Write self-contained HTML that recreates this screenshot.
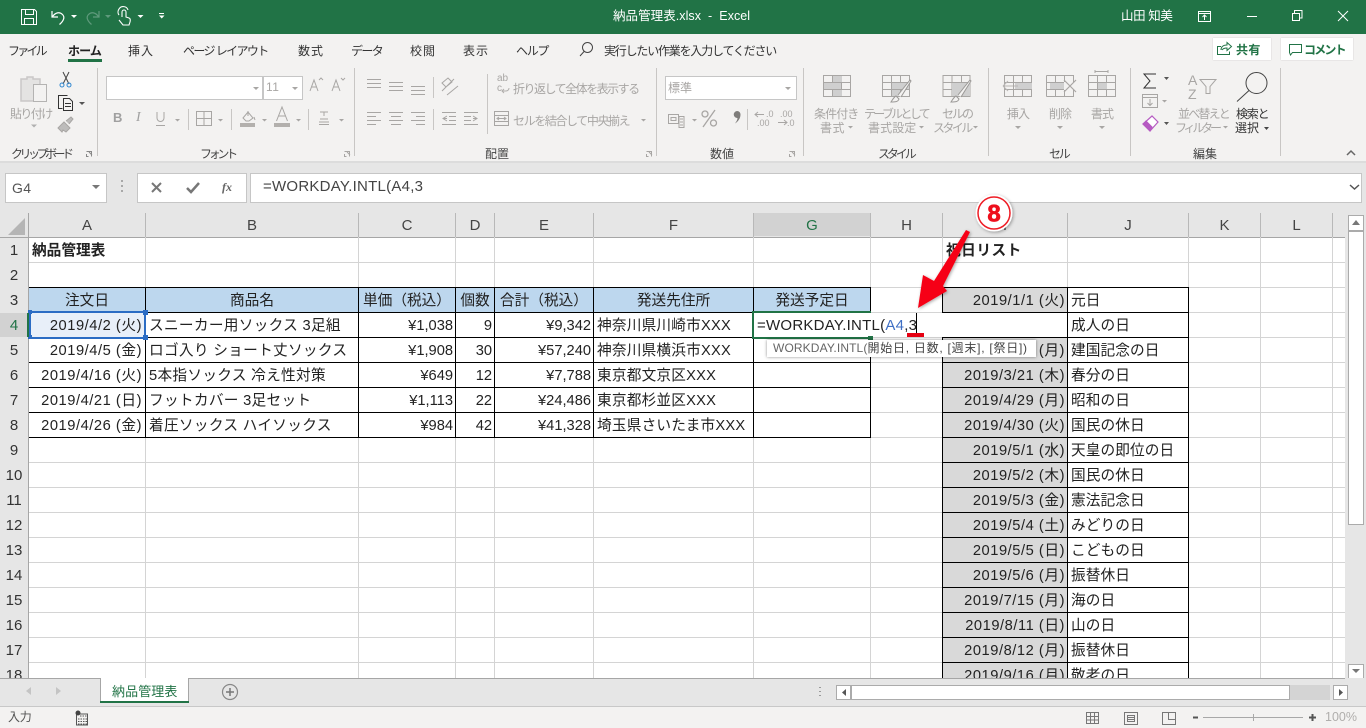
<!DOCTYPE html>
<html lang="ja"><head><meta charset="utf-8"><title>納品管理表.xlsx - Excel</title>
<style>
html,body{margin:0;padding:0;width:1366px;height:728px;overflow:hidden;background:#fff}
body{position:relative;font-family:"Liberation Sans","Noto Sans CJK JP",sans-serif;color:#222}
div,svg{position:absolute}
.t{position:absolute;white-space:nowrap;font-size:12px;line-height:16px;letter-spacing:-.9px}
.g{color:#a8a6a4}
.m{transform:translateX(-50%)}
.h{position:absolute;top:213px;height:24px;line-height:25px;text-align:center;font-size:15px;color:#444}
.n{position:absolute;left:0;width:28px;height:24px;line-height:25px;text-align:center;font-size:15px;color:#333}
.c{position:absolute;height:24px;line-height:27px;font-size:14.67px;white-space:nowrap;color:#222}
.d{text-align:right;letter-spacing:.55px}
.e{text-align:center}
.A{left:29px;width:113px}.B{left:149px;letter-spacing:.3px}.C{left:359px;width:94px;text-align:right}.CC{left:359px;width:96px}
.D{left:456px;width:36px;text-align:right}.DC{left:456px;width:38px}.E{left:495px;width:96px;text-align:right}.EC{left:495px;width:98px}
.F{left:597px;letter-spacing:.2px}.FC{left:594px;width:159px}.GC{left:754px;width:116px}.I{left:943px;width:122px}.J{left:1071px;letter-spacing:.1px}
.AC{left:29px;width:116px}.BC{left:146px;width:212px}
.r1{top:238px}.r3{top:288px}.r4{top:313px}.r5{top:338px}.r6{top:363px}.r7{top:388px}.r8{top:413px}.r9{top:438px}.r10{top:463px}.r11{top:488px}.r12{top:513px}.r13{top:538px}.r14{top:563px}.r15{top:588px}.r16{top:613px}.r17{top:638px}.r18{top:663px}
.r2{top:263px}
.v{position:absolute;top:237px;height:441px;width:1px;background:#d4d4d4}
.x{position:absolute;background:#000}
.hs{position:absolute;top:213px;height:24px;width:1px;background:#b8b8b8}
</style></head><body>

<!-- title bar -->
<div style="left:0;top:0;width:1366px;height:34px;background:#217346"></div>
<div class="t" style="left:613px;top:8px;color:#fff;font-size:12.5px;letter-spacing:.05px">納品管理表.xlsx &nbsp;-&nbsp; Excel</div>
<div class="t" style="left:1121px;top:8px;color:#fff;font-size:12.5px;letter-spacing:-.4px">山田 知美</div>
<svg style="left:0;top:0" width="1366" height="34" fill="none" stroke="#fff" stroke-width="1">
<path d="M21.5 9.5h13l2 2v13h-15zM25.5 9.5v5h8v-5M24.5 24.5v-6h9v6"/>
<path d="M52 11v6h6M52.5 16.500c3-4 7-5 10-2 2.500 2.500 1.500 6-3 10" stroke-width="1.200"/>
<path d="M71 15h6l-3 3z" fill="#fff" stroke="none"/>
<path d="M99 11v6h-6M98.500 16.500c-3-4-7-5-10-2-2.500 2.500-1.500 6 3 10" stroke="#5f9a7c" stroke-width="1.200"/>
<path d="M105 15h6l-3 3z" fill="#5f9a7c" stroke="none"/>
<path d="M122 17v-5a2 2 0 0 1 4 0v5l3 1c1.500.5 1.500 2 1 4l-1 3h-6l-4-5M119 15a5 5 0 0 1 0-6a5 5 0 0 1 9 1" stroke-width="1.100"/>
<path d="M137.500 15h6l-3 3z" fill="#fff" stroke="none"/>
<path d="M159 13.500h5" /><path d="M159 15.500h5.500l-2.750 3z" fill="#fff" stroke="none"/>
<path d="M1198.500 11.500h12v10h-12zM1198.500 13.500h12M1204.500 20v-5M1202.500 17l2-2 2 2"/>
<path d="M1247 16.500h10"/>
<path d="M1292.500 13.500h7v7h-7zM1294.500 13v-2.500h7.500v7.500h-2.500"/>
<path d="M1338 11l10 10M1348 11l-10 10"/>
</svg>

<!-- ribbon -->
<div style="left:0;top:34px;width:1366px;height:127px;background:#f3f2f1"></div>
<div style="left:0;top:161px;width:1366px;height:2px;background:#dcdcdc"></div>
<div class="t" style="left:8px;top:43px;letter-spacing:-2.8px;color:#333">ファイル</div>
<div class="t" style="left:68px;top:43px;font-weight:700;letter-spacing:-.9px;color:#222">ホーム</div>
<div style="left:68px;top:59px;width:34px;height:3px;background:#217346"></div>
<div class="t" style="left:128px;top:43px;letter-spacing:1px;color:#333">挿入</div>
<div class="t" style="left:183px;top:43px;letter-spacing:-1.6px;color:#333">ページ レイアウト</div>
<div class="t" style="left:298px;top:43px;letter-spacing:1px;color:#333">数式</div>
<div class="t" style="left:351px;top:43px;letter-spacing:-1.6px;color:#333">データ</div>
<div class="t" style="left:410px;top:43px;letter-spacing:1px;color:#333">校閲</div>
<div class="t" style="left:463px;top:43px;letter-spacing:1px;color:#333">表示</div>
<div class="t" style="left:516px;top:43px;letter-spacing:-1.300px;color:#333">ヘルプ</div>
<div class="t" style="left:604px;top:43px;letter-spacing:-1.200px;color:#333">実行したい作業を入力してください</div>

<div style="left:1213px;top:38px;width:58px;height:22px;background:#fff;box-shadow:0 0 1px #bbb"></div>
<div class="t" style="left:1236px;top:42px;font-weight:700;color:#217346;letter-spacing:.4px">共有</div>
<div style="left:1281px;top:38px;width:72px;height:22px;background:#fff;box-shadow:0 0 1px #bbb"></div>
<div class="t" style="left:1304px;top:42px;font-weight:700;color:#217346;letter-spacing:-1.800px">コメント</div>

<!-- font & number boxes -->
<div style="left:106px;top:76px;width:155px;height:22px;background:#fff;border:1px solid #c6c6c6"></div>
<div style="left:263px;top:76px;width:38px;height:22px;background:#fff;border:1px solid #c6c6c6"></div>
<div class="t g" style="left:266px;top:79px;letter-spacing:.5px">11</div>
<div style="left:665px;top:76px;width:130px;height:22px;background:#fff;border:1px solid #c6c6c6"></div>
<div class="t g" style="left:668px;top:80px;letter-spacing:0">標準</div>

<svg style="left:0;top:34px" width="1366" height="127" viewBox="0 34 1366 127" fill="none" stroke="#a8a6a4" stroke-width="1">
<!-- search, share, comment -->
<path d="M580 56l4.500-5" stroke="#444"/><circle cx="587.500" cy="47.500" r="5" stroke="#444"/>
<path d="M1221 46.500h-3.500v8h12v-3M1221 50c0-3 2-5 6-5v-2.500l4.500 4-4.500 4v-2.500c-2 0-4 .5-5 2" stroke="#217346"/>
<path d="M1289.500 44.500h12v8h-9l-2 2.500-1-2.500z" stroke="#217346"/>
<!-- separators -->
<path d="M97.500 68v88M354.500 68v88M656.500 68v88M803.500 68v88M988.500 68v88M1130.500 68v88M1280.500 68v88" stroke="#c8c6c4"/>
<path d="M188.500 109v21M231.500 109v21M308.500 109v21M433.500 77v21M433.500 109v21M487.500 74v60M747.500 109v21" stroke="#c8c6c4"/>
<!-- clipboard -->
<path d="M21 79h6v-2h6v2h7v22H21z" fill="#e4e3e2" stroke="#c9c8c7" stroke-width="1.500"/>
<path d="M33.500 84.500h13v17h-13z" fill="#f3f2f1" stroke="#b4b3b2"/>
<path d="M31 124.500h6l-3 3z" fill="#b0b0b0" stroke="none"/>
<path d="M63 72l6 12M69 72l-6 12" stroke="#444"/>
<circle cx="62" cy="85" r="2" stroke="#2e86d0"/><circle cx="69" cy="85" r="2" stroke="#2e86d0"/>
<path d="M62.500 108.500h-4v-13h9M63.500 98.500h6l3 3v9h-9zM65 103.500h6M65 106.500h6" stroke="#333"/>
<path d="M79 102h6l-3 3z" fill="#555" stroke="none"/>
<path d="M58 128l6-6 6 6-4 4-3-2-1 2zM66 121l5-4 2 2-4 5" fill="#bdbcbb" stroke="#a8a6a4"/>
<!-- launchers -->
<path d="M86.500 151.500h5v5M89 152l3 3M86.500 154v2.500h2" stroke="#888"/>
<path d="M344.500 151.500h5v5M347 152l3 3M344.500 154v2.500h2"/>
<path d="M646.500 151.500h5v5M649 152l3 3M646.500 154v2.500h2"/>
<path d="M789.500 151.500h5v5M792 152l3 3M789.500 154v2.500h2"/>
<!-- drop arrows -->
<path d="M253 87h6l-3 3zM292 87h6l-3 3zM175 119h5l-2.500 2.500zM218 119h5l-2.500 2.500zM262 119h5l-2.500 2.500zM296 119h5l-2.500 2.500zM339 119h5l-2.500 2.500zM785 87h6l-3 3zM641 119h5l-2.500 2.500zM692 119h5l-2.500 2.500z" fill="#a8a6a4" stroke="none"/>
<path d="M848 126h5l-2.500 2.500zM919 126h5l-2.500 2.500zM973 126h5l-2.500 2.500zM1223 126h5l-2.500 2.500zM1162 100h5l-2.500 2.500z" fill="#a8a6a4" stroke="none"/>
<!-- font grow/shrink -->
<path d="M310 91l4-11 4 11M311.500 87h5.500M319 80l2-2 2 2M332 91l4-11 4 11M333.500 87h5.500M341 78l2 2 2-2"/>
<path d="M157 112v6a3.500 3.500 0 0 0 7 0v-6M156 125.500h9"/>
<path d="M196.500 111.500h15v14h-15zM204 111v15M196 118.500h16"/>
<path d="M240 127h15v-4h-15z" fill="#b3b0ad" stroke="none"/>
<path d="M243 118l5-6 5 6-4 3h-3zM248 111v5M254 117l1 3"/>
<path d="M274 127h16v-4h-16z" fill="#b3b0ad" stroke="none"/>
<path d="M276.500 121l5.500-14 5.500 14M278.500 116h7"/>
<path d="M320 112h8M324 112v4M319 122h10M319 124.500h10M320 119h8"/>
<!-- align -->
<path d="M367 79.500h14M367 83.500h14M367 87.500h14M389 82.500h14M389 86.500h14M389 90.500h14M411 86.500h14M411 90.500h14M411 94.500h14"/>
<path d="M367 112.500h14M367 116.500h9M367 120.500h14M367 124.500h9M389 112.500h14M391 116.500h10M389 120.500h14M391 124.500h10M411 112.500h14M416 116.500h9M411 120.500h14M416 124.500h9"/>
<path d="M442 91l12-12M447 95l11-9M442 83l6-5 4 4-6 5z"/>
<path d="M442 112.500h14M449 116.500h7M449 120.500h7M442 124.500h14M447 116l-4 2.500 4 2.500M447 118.500h-4"/>
<path d="M464 112.500h14M464 116.500h7M464 120.500h7M464 124.500h14M473 116l4 2.500-4 2.500M473 118.500h4"/>
<path d="M509 88a3 3 0 0 1-3 3h-4M504 89l-2 2 2 2" stroke="#b0aeac"/>
<path d="M494.500 111.500h14v14h-14zM494 115.500h15M494 121.500h15M498 118.500h7M499 117l-2 1.500 2 1.500M504 117l2 1.500-2 1.500"/>
<!-- number icons -->
<path d="M668.500 114.500h10v9h-10zM671 117.500h5v3h-5zM679 116.500h5v11h-5zM680 119h3M680 122h3M680 125h3"/>
<path d="M715 110l-12 17" stroke-width="1.300"/>
<circle cx="705" cy="114" r="3" stroke-width="1.300"/><circle cx="713.500" cy="123" r="3" stroke-width="1.300"/>
<path d="M737 111c2 0 3.500 1.500 3.500 3.500 0 4-2.500 7-5.500 9 1.500-2 2.500-4 2.500-5.500a3.500 3.500 0 0 1-.5-7z" fill="#7f7d7b" stroke="none"/>
<path d="M755 114.500h9M758 112l-3 2.500 3 2.500M778 122.500h9M784 120l3 2.500-3 2.500"/>
<!-- style icons -->
<path d="M823.500 75.500h27v21h-27zM823 82.500h28M823 89.500h28M832.500 75v22M841.500 75v22"/>
<path d="M833 76h9v6h-9zM824 83h17v6h-17zM833 90h9v6h-9z" fill="#cfcfcf" stroke="none"/>
<path d="M882.500 75.500h27v21h-27zM882 82.500h28M882 89.500h28M891.500 75v22M900.500 75v22"/>
<path d="M892 83h17v6h-17zM892 90h8v6h-8z" fill="#cfcfcf" stroke="none"/>
<path d="M943 75.500h27v21h-27zM943 82.500h27M943 89.500h27M952 75v22M961.500 75v22"/>
<path d="M952 83h18v13h-18z" fill="#cfcfcf" stroke="none"/>
<path d="M896 96c-2 1-3 3-5 6 4 0 7 0 8-3zM898 95l12-15 1 1-10 16" fill="#f3f2f1" stroke="#9a9896"/>
<path d="M956 96c-2 1-3 3-5 6 4 0 7 0 8-3zM958 95l12-15 1 1-10 16" fill="#f3f2f1" stroke="#9a9896"/>
<!-- cell icons -->
<path d="M1004.500 75.500h27v21h-27zM1004 82.500h28M1004 89.500h28M1013.500 75v22M1022.500 75v22"/>
<path d="M1015 83h17v6h-17z" fill="#cfcfcf" stroke="none"/>
<path d="M1003 86h10M1003 86l5-5M1003 86l5 5M1014 86h4" fill="none" stroke="#b8b6b4"/>
<path d="M1046.500 75.500h27M1046.500 96.500h27M1046.500 75.500v21M1046 82.500h18M1046 89.500h18M1055.500 75v22M1064.500 75v7M1064.500 90v7M1073.500 75v7M1073.500 90v7"/>
<path d="M1050 83h14v6h-14z" fill="#cfcfcf" stroke="none"/>
<path d="M1064 80l12 12M1076 80l-12 12" stroke-width="1.200"/>
<path d="M1088.500 75.500h27v21h-27zM1088 82.500h28M1088 89.500h28M1097.500 75v22M1106.500 75v22"/>
<path d="M1098 83h9v6h-9z" fill="#cfcfcf" stroke="none"/>
<path d="M1095 71.500h13M1095 70v3M1108 70v3"/>
<path d="M1015 126h6l-3 3zM1057 126h6l-3 3zM1099 126h6l-3 3z" fill="#a8a6a4" stroke="none"/>
<!-- edit icons -->
<path d="M1156 74h-12l6 7-6 7h12" stroke="#333"/>
<path d="M1164 77h5l-2.500 3zM1164 122h5l-2.500 3z" fill="#555" stroke="none"/>
<path d="M1142.500 94.500h15v13h-15zM1143 97.500h14M1150 99v6M1147.500 103l2.500 2.500 2.500-2.500"/>
<path d="M1143 124l9-8 6 6-8 9z" fill="#fff" stroke="#b65bc2" stroke-width="1.200"/>
<path d="M1143 124l3-3 6 6-2 4z" fill="#b65bc2" stroke="#b65bc2"/>
<text x="1188" y="85" font-family="Liberation Sans" font-size="14" fill="#a8a6a4" stroke="none">A</text>
<text x="1188" y="99" font-family="Liberation Sans" font-size="14" fill="#a8a6a4" stroke="none">Z</text>
<path d="M1200 79.500h16l-6 7v7h-4v-7z"/>
<circle cx="1256.500" cy="83" r="10.500" stroke="#444"/><path d="M1249 90.500l-12 11" stroke="#444"/>
<path d="M1264 127h5l-2.500 3z" fill="#444" stroke="none"/>
<path d="M1347 155l4-4 4 4" stroke="#666" stroke-width="1.500"/>
</svg>

<div class="t g" style="left:10px;top:106px;letter-spacing:-1.600px">貼り付け</div>
<div class="t g" style="left:497px;top:74px;font-size:10px;letter-spacing:0;line-height:10px">ab<br>c</div>
<div class="t g" style="left:513px;top:81px;letter-spacing:-1.500px">折り返して全体を表示する</div>
<div class="t g" style="left:513px;top:113px;letter-spacing:-1.400px">セルを結合して中央揃え</div>
<div class="t g" style="left:814px;top:106px">条件付き</div>
<div class="t g" style="left:820px;top:120px;letter-spacing:.5px">書式</div>
<div class="t g" style="left:864px;top:106px;letter-spacing:-2.700px">テーブルとして</div>
<div class="t g" style="left:868px;top:120px;letter-spacing:.1px">書式設定</div>
<div class="t g" style="left:942px;top:106px;letter-spacing:-2px">セルの</div>
<div class="t g" style="left:933px;top:120px;letter-spacing:-2.600px">スタイル</div>
<div class="t g" style="left:1018px;top:106px;transform:translateX(-50%)">挿入</div>
<div class="t g" style="left:1060px;top:106px;transform:translateX(-50%)">削除</div>
<div class="t g" style="left:1102px;top:106px;transform:translateX(-50%)">書式</div>
<div class="t g" style="left:1178px;top:106px;letter-spacing:-1.800px">並べ替えと</div>
<div class="t g" style="left:1175px;top:120px;letter-spacing:-3.200px">フィルター</div>
<div class="t" style="left:1236px;top:106px;color:#333;letter-spacing:-1.200px">検索と</div>
<div class="t" style="left:1235px;top:120px;color:#333;letter-spacing:0">選択</div>
<div class="t" style="left:11px;top:146px;color:#444;letter-spacing:-3.500px">クリップボード</div>
<div class="t" style="left:200px;top:146px;color:#444;letter-spacing:-3.300px">フォント</div>
<div class="t" style="left:485px;top:146px;color:#444;letter-spacing:0">配置</div>
<div class="t" style="left:710px;top:146px;color:#444;letter-spacing:0">数値</div>
<div class="t" style="left:878px;top:146px;color:#444;letter-spacing:-3.100px">スタイル</div>
<div class="t" style="left:1049px;top:146px;color:#444;letter-spacing:-2.200px">セル</div>
<div class="t" style="left:1193px;top:146px;color:#444;letter-spacing:0">編集</div>
<div class="t" style="left:113px;top:110px;font-weight:700;font-size:13px;color:#a0a0a0">B</div>
<div class="t" style="left:136px;top:110px;font-family:'Liberation Serif',serif;font-style:italic;font-size:14px;color:#a0a0a0">I</div>
<div class="t g" style="left:766px;top:110px;font-size:9px;letter-spacing:0;line-height:9px">.0</div>
<div class="t g" style="left:757px;top:119px;font-size:9px;letter-spacing:0;line-height:9px">.00</div>
<div class="t g" style="left:780px;top:110px;font-size:9px;letter-spacing:0;line-height:9px">.00</div>
<div class="t g" style="left:787px;top:119px;font-size:9px;letter-spacing:0;line-height:9px">.0</div>

<!-- formula bar area -->
<div style="left:0;top:163px;width:1366px;height:50px;background:#e6e6e6"></div>
<div style="left:5px;top:173px;width:100px;height:28px;background:#fff;border:1px solid #c6c6c6"></div>
<div class="t" style="left:12px;top:180px;font-size:14px;color:#555;letter-spacing:.3px">G4</div>
<div style="left:137px;top:173px;width:108px;height:28px;background:#fff;border:1px solid #c6c6c6"></div>
<div style="left:250px;top:173px;width:1110px;height:28px;background:#fff;border:1px solid #c6c6c6"></div>
<div class="t" style="left:263px;top:179px;font-size:15px;color:#444;letter-spacing:.25px">=WORKDAY.INTL(A4,3</div>
<div class="t" style="left:222px;top:179px;font-family:'Liberation Serif',serif;font-style:italic;font-weight:700;font-size:12px;color:#666;letter-spacing:0">fx</div>
<svg style="left:0;top:165px" width="1366" height="48" viewBox="0 165 1366 48" fill="none">
<path d="M92 185h8l-4 4z" fill="#777"/>
<path d="M122 180v2M122 185v2M122 190v2" stroke="#999" stroke-width="2" opacity=".8"/>
<path d="M152 183l9 9M161 183l-9 9" stroke="#777" stroke-width="2"/>
<path d="M187 188l4 4 8-9" stroke="#777" stroke-width="2.500"/>
<path d="M1350 185l4.500 4 4.500-4" stroke="#555" stroke-width="1.500"/>
</svg>

<!-- headers -->
<div style="left:0;top:213px;width:1345px;height:24px;background:#e6e6e6"></div>
<div style="left:754px;top:213px;width:116px;height:23px;background:#d2d2d2"></div>
<div style="left:0;top:237px;width:28px;height:441px;background:#e6e6e6"></div>
<div style="left:0;top:313px;width:28px;height:24px;background:#d2d2d2"></div>
<svg style="left:8px;top:218px" width="18" height="17"><path d="M17 0v17H0z" fill="#b5b5b5"/></svg>
<div class="hs" style="left:28px"></div><div class="hs" style="left:145px"></div><div class="hs" style="left:358px"></div><div class="hs" style="left:455px"></div><div class="hs" style="left:494px"></div><div class="hs" style="left:593px"></div><div class="hs" style="left:753px"></div><div class="hs" style="left:870px"></div><div class="hs" style="left:942px"></div><div class="hs" style="left:1067px"></div><div class="hs" style="left:1188px"></div><div class="hs" style="left:1260px"></div><div class="hs" style="left:1332px"></div>
<div class="h AC">A</div><div class="h BC">B</div><div class="h CC">C</div><div class="h DC">D</div><div class="h EC">E</div><div class="h FC">F</div><div class="h GC" style="color:#217346">G</div>
<div class="h" style="left:871px;width:71px">H</div><div class="h" style="left:943px;width:124px">I</div><div class="h" style="left:1068px;width:120px">J</div><div class="h" style="left:1189px;width:71px">K</div><div class="h" style="left:1261px;width:71px">L</div>
<div class="n r1">1</div><div class="n r2">2</div><div class="n r3">3</div><div class="n r4" style="color:#217346">4</div><div class="n r5">5</div><div class="n r6">6</div><div class="n r7">7</div><div class="n r8">8</div><div class="n r9">9</div><div class="n r10">10</div><div class="n r11">11</div><div class="n r12">12</div><div class="n r13">13</div><div class="n r14">14</div><div class="n r15">15</div><div class="n r16">16</div><div class="n r17">17</div><div class="n r18" style="height:15px;overflow:hidden">18</div>

<!-- grid -->
<div style="left:29px;top:237px;width:1316px;height:441px;background:repeating-linear-gradient(to bottom,#fff 0,#fff 24px,#d4d4d4 24px,#d4d4d4 25px);background-position:0 1px"></div>
<div style="left:29px;top:237px;width:1316px;height:1px;background:#a6a6a6"></div>
<div style="left:0;top:237px;width:29px;height:1px;background:#a6a6a6"></div>
<div style="left:28px;top:213px;width:1px;height:465px;background:#a6a6a6"></div>
<div class="v" style="left:145px"></div><div class="v" style="left:358px"></div><div class="v" style="left:455px"></div><div class="v" style="left:494px"></div><div class="v" style="left:593px"></div><div class="v" style="left:753px"></div><div class="v" style="left:870px"></div><div class="v" style="left:942px"></div><div class="v" style="left:1067px"></div><div class="v" style="left:1188px"></div><div class="v" style="left:1260px"></div><div class="v" style="left:1332px"></div>

<!-- fills -->
<div style="left:29px;top:288px;width:841px;height:24px;background:#bdd7ee"></div>
<div style="left:943px;top:288px;width:124px;height:390px;background:#d9d9d9"></div>
<div style="left:1068px;top:288px;width:120px;height:390px;background:#fff"></div>
<div style="left:30px;top:313px;width:115px;height:24px;background:#e8eff9"></div>
<!-- black borders -->
<div class="x" style="left:29px;top:287px;width:842px;height:1px"></div>
<div class="x" style="left:29px;top:312px;width:842px;height:1px"></div>
<div class="x" style="left:29px;top:337px;width:842px;height:1px"></div>
<div class="x" style="left:29px;top:362px;width:842px;height:1px"></div>
<div class="x" style="left:29px;top:387px;width:842px;height:1px"></div>
<div class="x" style="left:29px;top:412px;width:842px;height:1px"></div>
<div class="x" style="left:29px;top:437px;width:842px;height:1px"></div>
<div class="x" style="left:145px;top:287px;width:1px;height:151px"></div>
<div class="x" style="left:358px;top:287px;width:1px;height:151px"></div>
<div class="x" style="left:455px;top:287px;width:1px;height:151px"></div>
<div class="x" style="left:494px;top:287px;width:1px;height:151px"></div>
<div class="x" style="left:593px;top:287px;width:1px;height:151px"></div>
<div class="x" style="left:753px;top:287px;width:1px;height:151px"></div>
<div class="x" style="left:870px;top:287px;width:1px;height:151px"></div>
<div class="x" style="left:942px;top:287px;width:1px;height:391px"></div>
<div class="x" style="left:1067px;top:287px;width:1px;height:391px"></div>
<div class="x" style="left:1188px;top:287px;width:1px;height:391px"></div>
<div class="x" style="left:942px;top:287px;width:247px;height:1px"></div>
<div class="x" style="left:942px;top:312px;width:247px;height:1px"></div>
<div class="x" style="left:942px;top:337px;width:247px;height:1px"></div>
<div class="x" style="left:942px;top:362px;width:247px;height:1px"></div>
<div class="x" style="left:942px;top:387px;width:247px;height:1px"></div>
<div class="x" style="left:942px;top:412px;width:247px;height:1px"></div>
<div class="x" style="left:942px;top:437px;width:247px;height:1px"></div>
<div class="x" style="left:942px;top:462px;width:247px;height:1px"></div>
<div class="x" style="left:942px;top:487px;width:247px;height:1px"></div>
<div class="x" style="left:942px;top:512px;width:247px;height:1px"></div>
<div class="x" style="left:942px;top:537px;width:247px;height:1px"></div>
<div class="x" style="left:942px;top:562px;width:247px;height:1px"></div>
<div class="x" style="left:942px;top:587px;width:247px;height:1px"></div>
<div class="x" style="left:942px;top:612px;width:247px;height:1px"></div>
<div class="x" style="left:942px;top:637px;width:247px;height:1px"></div>
<div class="x" style="left:942px;top:662px;width:247px;height:1px"></div>

<!-- cells -->
<div class="c r1" style="left:32px;font-weight:700">納品管理表</div>
<div class="c r1" style="left:946px;font-weight:700;letter-spacing:.5px">祝日リスト</div>
<div class="c r3 AC e">注文日</div><div class="c r3 BC e">商品名</div><div class="c r3 CC e">単価（税込）</div><div class="c r3 DC e">個数</div><div class="c r3 EC e">合計（税込）</div><div class="c r3 FC e">発送先住所</div><div class="c r3 GC e">発送予定日</div>
<div class="c r4 A d">2019/4/2 (火)</div><div class="c r4 B">スニーカー用ソックス 3足組</div><div class="c r4 C">¥1,038</div><div class="c r4 D">9</div><div class="c r4 E">¥9,342</div><div class="c r4 F">神奈川県川崎市XXX</div>
<div class="c r5 A d">2019/4/5 (金)</div><div class="c r5 B">ロゴ入り ショート丈ソックス</div><div class="c r5 C">¥1,908</div><div class="c r5 D">30</div><div class="c r5 E">¥57,240</div><div class="c r5 F">神奈川県横浜市XXX</div>
<div class="c r6 A d">2019/4/16 (火)</div><div class="c r6 B">5本指ソックス 冷え性対策</div><div class="c r6 C">¥649</div><div class="c r6 D">12</div><div class="c r6 E">¥7,788</div><div class="c r6 F">東京都文京区XXX</div>
<div class="c r7 A d">2019/4/21 (日)</div><div class="c r7 B">フットカバー 3足セット</div><div class="c r7 C">¥1,113</div><div class="c r7 D">22</div><div class="c r7 E">¥24,486</div><div class="c r7 F">東京都杉並区XXX</div>
<div class="c r8 A d">2019/4/26 (金)</div><div class="c r8 B">着圧ソックス ハイソックス</div><div class="c r8 C">¥984</div><div class="c r8 D">42</div><div class="c r8 E">¥41,328</div><div class="c r8 F">埼玉県さいたま市XXX</div>

<div class="c r3 I d">2019/1/1 (火)</div><div class="c r3 J">元日</div>
<div class="c r4 J">成人の日</div>
<div class="c r5 I d">2019/2/11 (月)</div><div class="c r5 J">建国記念の日</div>
<div class="c r6 I d">2019/3/21 (木)</div><div class="c r6 J">春分の日</div>
<div class="c r7 I d">2019/4/29 (月)</div><div class="c r7 J">昭和の日</div>
<div class="c r8 I d">2019/4/30 (火)</div><div class="c r8 J">国民の休日</div>
<div class="c r9 I d">2019/5/1 (水)</div><div class="c r9 J">天皇の即位の日</div>
<div class="c r10 I d">2019/5/2 (木)</div><div class="c r10 J">国民の休日</div>
<div class="c r11 I d">2019/5/3 (金)</div><div class="c r11 J">憲法記念日</div>
<div class="c r12 I d">2019/5/4 (土)</div><div class="c r12 J">みどりの日</div>
<div class="c r13 I d">2019/5/5 (日)</div><div class="c r13 J">こどもの日</div>
<div class="c r14 I d">2019/5/6 (月)</div><div class="c r14 J">振替休日</div>
<div class="c r15 I d">2019/7/15 (月)</div><div class="c r15 J">海の日</div>
<div class="c r16 I d">2019/8/11 (日)</div><div class="c r16 J">山の日</div>
<div class="c r17 I d">2019/8/12 (月)</div><div class="c r17 J">振替休日</div>
<div class="c r18 I d" style="height:15px;overflow:hidden">2019/9/16 (月)</div><div class="c r18 J" style="height:15px;overflow:hidden">敬老の日</div>

<!-- reference marks -->
<div style="left:29px;top:311px;width:113px;height:24px;border:2px solid #2b6cc4"></div>
<div style="left:28px;top:310px;width:4px;height:4px;background:#2b6cc4"></div>
<div style="left:143px;top:310px;width:5px;height:5px;background:#2b6cc4"></div>
<div style="left:28px;top:335px;width:4px;height:4px;background:#2b6cc4"></div>
<div style="left:143px;top:335px;width:5px;height:5px;background:#2b6cc4"></div>
<div style="left:27px;top:313px;width:2px;height:24px;background:#217346"></div>

<!-- active cell editor -->
<div style="left:754px;top:313px;width:313px;height:24px;background:#fff"></div>
<div style="left:752px;top:311px;width:119px;height:2px;background:#217346"></div>
<div style="left:752px;top:311px;width:2px;height:28px;background:#217346"></div>
<div style="left:752px;top:337px;width:119px;height:2px;background:#217346"></div>
<div style="left:868px;top:336px;width:5px;height:4px;background:#217346"></div>
<div class="c r4" style="left:757px;font-size:15px;line-height:26px;letter-spacing:.25px;color:#222">=WORKDAY.INTL(<span style="color:#3f6fc4">A4</span>,3</div>
<div style="left:916px;top:313px;width:1px;height:24px;background:#000"></div>
<div style="left:907px;top:333px;width:17px;height:4px;background:#e60012"></div>

<!-- tooltip -->
<div style="left:767px;top:340px;width:269px;height:17px;background:#fff;box-shadow:0 0 3px rgba(0,0,0,.45)"></div>
<div class="t" style="left:773px;top:340px;font-size:12px;letter-spacing:.12px;color:#666;line-height:16px">WORKDAY.INTL(<span style="color:#444;letter-spacing:.75px">開始日, 日数, [週末], [祭日])</span></div>

<!-- callout -->
<svg style="left:900px;top:190px" width="130" height="125" viewBox="900 190 130 125">
<defs><filter id="s" x="-30%" y="-30%" width="160%" height="160%"><feDropShadow dx="1" dy="1" stdDeviation="1.500" flood-color="#000" flood-opacity=".35"/></filter></defs>
<polygon points="918,308 923,275 934,281 966,230 970,232 943,286 947,291" fill="#f60014" filter="url(#s)"/>
<circle cx="994" cy="213" r="18.500" fill="#fff" filter="url(#s)"/>
<circle cx="994" cy="213" r="16" fill="#fff" stroke="#ee1c25" stroke-width="1.500"/>
<text x="994" y="221.500" text-anchor="middle" font-family="Liberation Sans" font-weight="700" font-size="24" fill="#ee0f1c" stroke="#ee0f1c" stroke-width=".7">8</text>
</svg>

<!-- vertical scrollbar -->
<div style="left:1345px;top:213px;width:21px;height:465px;background:#e6e6e6"></div>
<div style="left:1348px;top:215px;width:14px;height:14px;background:#fff;border:1px solid #ababab"></div>
<div style="left:1348px;top:231px;width:14px;height:292px;background:#fff;border:1px solid #ababab"></div>
<div style="left:1348px;top:664px;width:14px;height:13px;background:#fff;border:1px solid #ababab"></div>
<svg style="left:1348px;top:215px" width="16" height="16"><path d="M4 10h8l-4-5z" fill="#777"/></svg>
<svg style="left:1348px;top:664px" width="16" height="14"><path d="M4 5h8l-4 4z" fill="#777"/></svg>

<!-- tab bar -->
<div style="left:0;top:678px;width:1366px;height:28px;background:#e6e6e6"></div>
<div style="left:0;top:678px;width:1345px;height:1px;background:#a6a6a6"></div>
<div style="left:100px;top:678px;width:87px;height:24px;background:#fff;border:solid #a6a6a6;border-width:0 1px"></div>
<div style="left:100px;top:701px;width:89px;height:2px;background:#217346"></div>
<div class="t" style="left:112px;top:684px;font-size:13px;letter-spacing:.1px;color:#217346">納品管理表</div>
<svg style="left:0;top:678px" width="1366" height="28" fill="none">
<path d="M31 9v8l-5-4z" fill="#c4c4c4"/><path d="M56 9v8l5-4z" fill="#c4c4c4"/>
<circle cx="230" cy="14" r="7.500" stroke="#888" stroke-width="1.200"/><path d="M226 14h8M230 10v8" stroke="#777" stroke-width="1.500"/>
<path d="M820 9v1M820 13v1M820 17v1" stroke="#999" stroke-width="2"/>
</svg>
<div style="left:836px;top:685px;width:13px;height:13px;background:#fff;border:1px solid #ababab"></div>
<div style="left:851px;top:685px;width:437px;height:13px;background:#fff;border:1px solid #ababab"></div>
<div style="left:1290px;top:685px;width:40px;height:15px;background:#d4d4d4"></div>
<div style="left:1333px;top:685px;width:13px;height:13px;background:#fff;border:1px solid #ababab"></div>
<svg style="left:836px;top:685px" width="16" height="15"><path d="M10 4v7l-4-3.500z" fill="#555"/></svg>
<svg style="left:1333px;top:685px" width="16" height="15"><path d="M6 4v7l4-3.500z" fill="#555"/></svg>

<!-- status bar -->
<div style="left:0;top:706px;width:1366px;height:22px;background:#f3f2f1;border-top:1px solid #c8c8c8;box-sizing:border-box"></div>
<div class="t" style="left:8px;top:709px;color:#555;letter-spacing:-.3px">入力</div>
<svg style="left:0;top:706px" width="1366" height="22" fill="none" stroke="#777">
<path d="M76.500 8h11v11h-11z" fill="#f3f2f1" stroke="#555"/><circle cx="78" cy="7" r="2.500" fill="#444" stroke="none"/><path d="M80 10h7M78 13h9M78 15.500h9M78 18h9" stroke="#555" stroke-dasharray="1.500 1"/>
<path d="M1086.500 6.500h12v11h-12zM1090.500 6.500v11M1094.500 6.500v11M1086 10.500h13M1086 14h13"/>
<path d="M1124.500 6.500h13v12h-13zM1127.500 9.500h7v6h-7zM1128 11.500h6M1128 13.500h6"/>
<path d="M1162.500 6.500h13v12h-13zM1168.500 6.500v7h7"/>
<path d="M1193 11.500h5M1309 11.500h7M1312.500 8v7" stroke="#555" stroke-width="2"/>
<path d="M1203 11.500h100M1253.500 8v7" stroke="#a8a8a8"/>
</svg>
<div class="t" style="left:1325px;top:709px;color:#b0aeac;letter-spacing:0;font-size:12.5px">100%</div>
</body></html>
